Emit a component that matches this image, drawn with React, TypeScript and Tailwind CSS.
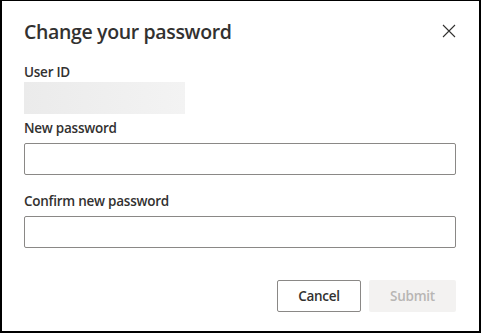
export default function App() {
  const label = "text-[13.5px] leading-[20px] font-semibold tracking-[-0.25px]";
  return (
    <div
      className="w-[481px] h-[333px] bg-white border-x-2 border-t border-b-2 border-black text-[#323130] flex flex-col"
      style={{ fontFamily: '"Open Sans", "Noto Sans", sans-serif' }}
    >
      <div className="flex items-start justify-between pl-[22px] pr-[23px] pt-[17px]">
        <h1 className="text-[19.5px] leading-[28px] font-semibold tracking-[-0.35px]">Change your password</h1>
        <button className="mt-[6px] w-[14px] h-[14px] flex items-center justify-center text-[#323130]">
          <svg width="14" height="14" viewBox="0 0 14 14" fill="none" stroke="currentColor" strokeWidth="1.1">
            <path d="M1 1 L13 13 M13 1 L1 13" />
          </svg>
        </button>
      </div>
      <div className="flex flex-col pl-[22px] pr-[23px] pt-[16px]">
        <label className={label}>User ID</label>
        <div className="w-[161px] h-[32px] bg-gradient-to-r from-[#ebebeb] to-[#f3f3f3]" />
        <label className={`mt-[4px] ${label}`}>New password</label>
        <input className="mt-[5px] h-[32px] w-full border border-[#8a8886] rounded-[2px] outline-none px-2 text-[14px]" type="password" />
        <label className={`mt-[16px] ${label}`}>Confirm new password</label>
        <input className="mt-[5px] h-[32px] w-full border border-[#8a8886] rounded-[2px] outline-none px-2 text-[14px]" type="password" />
        <div className="flex justify-end gap-[8px] mt-[32px]">
          <button className={`w-[84px] h-[32px] border border-[#8a8886] rounded-[2px] bg-white text-[#323130] ${label}`}>
            Cancel
          </button>
          <button disabled className={`w-[87px] h-[32px] rounded-[2px] bg-[#f3f2f1] text-[#b8b6b4] ${label}`}>
            Submit
          </button>
        </div>
      </div>
    </div>
  );
}
